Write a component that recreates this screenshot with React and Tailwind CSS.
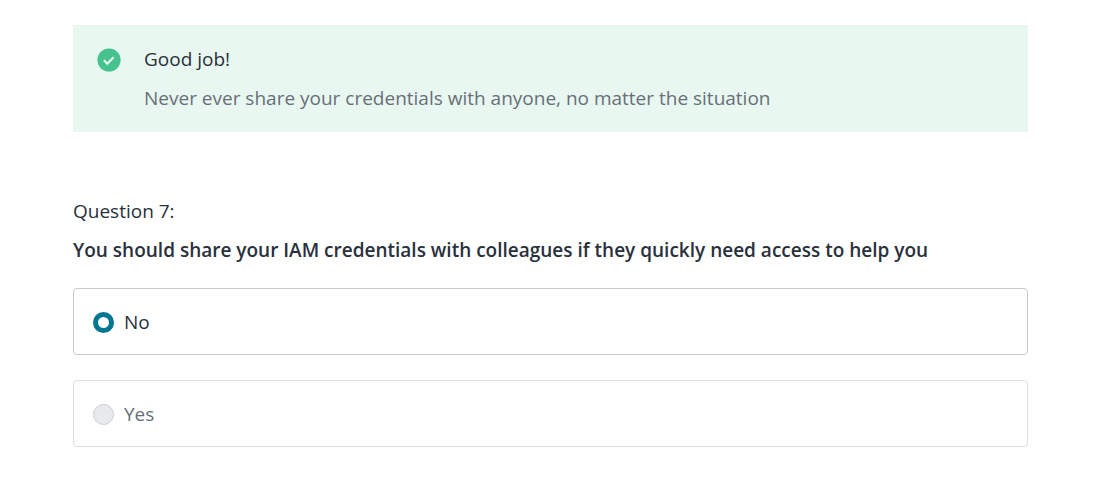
import React from "react";

function SuccessIcon() {
  return (
    <svg viewBox="0 0 24 24" className="mt-[3px] size-6 shrink-0" aria-hidden="true">
      <circle cx="12" cy="12" r="11.6" fill="#46c28e" />
      <path d="M6.9 12.2l3.4 3.5 6.4-6.5" fill="none" stroke="#e8f7f0" strokeWidth="2.1" />
    </svg>
  );
}

function Option({ label, checked }) {
  return (
    <label
      className={
        checked
          ? "flex h-[67px] items-center gap-2.5 rounded border border-[#c8c9cb] px-[19px] text-[#29303b]"
          : "flex h-[67px] items-center gap-2.5 rounded border border-[#dedfe0] px-[19px] text-[#686f7a]"
      }
    >
      <input
        type="radio"
        name="answer"
        checked={checked}
        disabled={!checked}
        readOnly
        className="mt-0.5 size-[21px] shrink-0 appearance-none rounded-full border border-[#cccfd2] bg-[#e8e9eb] checked:border-[5px] checked:border-[#007791] checked:bg-white"
      />
      <span>{label}</span>
    </label>
  );
}

export default function App() {
  return (
    <main className="bg-white py-[25px] pr-[77px] pl-[73px] font-['Open_Sans',sans-serif] text-[19px] leading-7 font-normal text-[#29303b]">
      <section className="flex gap-[23px] bg-[#e8f7f0] px-6 py-5">
        <SuccessIcon />
        <div className="space-y-[11px]">
          <p>Good job!</p>
          <p className="text-[#686f7a]">Never ever share your credentials with anyone, no matter the situation</p>
        </div>
      </section>
      <p className="mt-[65px]">Question 7:</p>
      <fieldset className="mt-[11px]">
        <legend className="font-semibold">
          You should share your IAM credentials with colleagues if they quickly need access to help you
        </legend>
        <div className="mt-6 space-y-[25px]">
          <Option label="No" checked />
          <Option label="Yes" checked={false} />
        </div>
      </fieldset>
    </main>
  );
}
